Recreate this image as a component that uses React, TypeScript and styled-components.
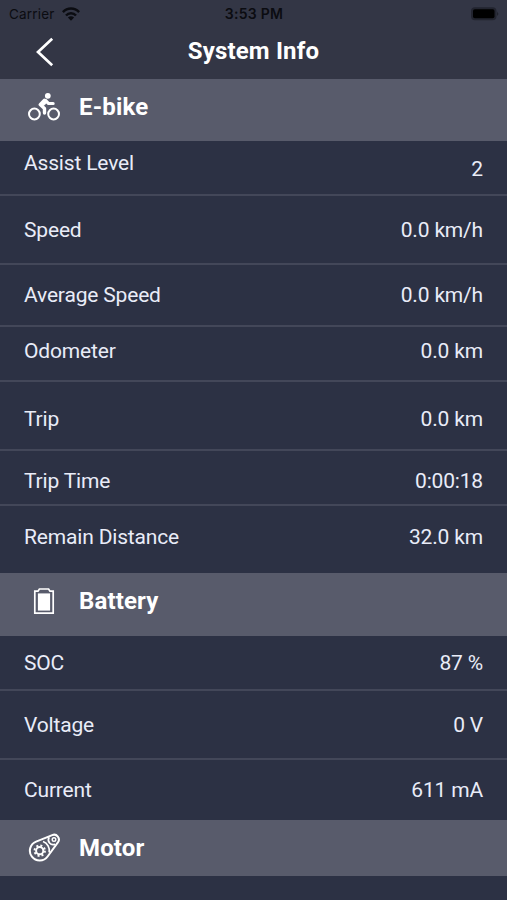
import React from "react";
import styled, { createGlobalStyle } from "styled-components";

const GlobalStyle = createGlobalStyle`
  * { box-sizing: border-box; }
  body { margin: 0; background: #2c3144; }
`;

const Screen = styled.main`
  display: flex;
  flex-direction: column;
  width: 507px;
  height: 900px;
  overflow: hidden;
  background: #2c3144;
  color: #e9ecf8;
  font-family: Roboto, "Liberation Sans", sans-serif;
`;

const TopBar = styled.header`
  height: 79px;
  flex: none;
  background: #333645;
`;

const StatusBar = styled.div`
  display: grid;
  grid-template-columns: 1fr auto 1fr;
  align-items: center;
  height: 27px;
  padding: 1px 8px 0 9px;
  color: #0b0c11;
  font-family: Inter, "Liberation Sans", sans-serif;
  font-size: 14px;
  line-height: 20px;
`;

const Carrier = styled.div`
  display: flex;
  align-items: center;
  gap: 7px;
  font-size: 13.5px;
  letter-spacing: 0.18px;
`;

const Clock = styled.time`
  font-weight: 600;
  letter-spacing: 0.25px;
`;

const BatteryLevel = styled.svg`
  justify-self: end;
`;

const NavBar = styled.nav`
  display: grid;
  grid-template-columns: 80px 1fr 80px;
  height: 52px;
`;

const BackButton = styled.button`
  display: flex;
  justify-content: flex-start;
  border: 0;
  padding: 9px 0 0 35px;
  background: none;
`;

const Title = styled.h1`
  margin: 0;
  padding-top: 10px;
  color: #fff;
  text-align: center;
  font-size: 24px;
  font-weight: 700;
  letter-spacing: 0.15px;
  line-height: 28px;
`;

const SectionHeader = styled.h2<{ $height: number; $top: number }>`
  display: flex;
  align-items: flex-start;
  flex: none;
  height: ${(p) => p.$height}px;
  margin: 0;
  padding: ${(p) => p.$top}px 0 0 27px;
  background: #585b6b;
  color: #fff;
  font-size: 24px;
  font-weight: 700;
  letter-spacing: 0.15px;
  line-height: 28px;
`;

const IconSlot = styled.span<{ $lift?: number }>`
  display: flex;
  width: 52px;
  margin-top: ${(p) => -(p.$lift ?? 0)}px;
`;

const Row = styled.div<{ $height: number; $last?: boolean }>`
  display: flex;
  justify-content: space-between;
  flex: none;
  height: ${(p) => p.$height}px;
  padding: 0 24px;
  border-bottom: ${(p) => (p.$last ? "0" : "2px solid #434759")};
  font-size: 21px;
  letter-spacing: -0.17px;
  line-height: 24px;
`;

const Cell = styled.span<{ $top: number }>`
  padding-top: ${(p) => p.$top}px;
  white-space: pre;
`;

const WifiIcon = () => (
  <svg width="18" height="14" viewBox="0 0 18 14" fill="none" stroke="#0b0c11" strokeWidth="2.5">
    <path d="M.9 5.2C5.4.4 12.6.4 17.1 5.2" />
    <path d="M4 8.5C6.7 5.6 11.3 5.6 14 8.5" />
    <path d="M9 13.7 5.9 10.5C7.6 8.9 10.4 8.9 12.1 10.5Z" fill="#0b0c11" stroke="none" />
  </svg>
);

const CyclistIcon = () => (
  <svg width="34" height="30" viewBox="0 0 34 30" fill="none" stroke="#fff">
    <circle cx="7.4" cy="22" r="5.4" strokeWidth="2" />
    <circle cx="26.6" cy="22" r="5.4" strokeWidth="2" />
    <circle cx="20.8" cy="3.8" r="2.9" fill="#fff" stroke="none" />
    <path d="M17.3 8.4 13.2 12.6 17.5 16.4V21" strokeWidth="3.4" strokeLinecap="round" strokeLinejoin="round" />
    <path d="M18.6 8.4 21.6 11.6H26.2" strokeWidth="3" strokeLinecap="round" strokeLinejoin="round" />
    <path d="M14.2 11 18.2 7.8 20 10.4 16.6 13.6Z" fill="#fff" strokeWidth="1" />
  </svg>
);

const BatteryIcon = () => (
  <svg width="34" height="30" viewBox="0 0 34 30" fill="none" stroke="#fff">
    <path d="M7.8 4.1H11L12.4 2H21.6L23 4.1H26.2V26.2H7.8Z" strokeWidth="1.7" />
    <path d="M10.9 6.4H23.1V23.6H10.9Z" fill="#fff" stroke="none" />
  </svg>
);

const MotorIcon = () => (
  <svg width="34" height="30" viewBox="0 0 34 30" fill="none" stroke="#fff">
    <path d="M9.1 8.6 25.2 2.1A4.8 4.8 0 0 1 30.9 9.4L20.6 23.5A9.8 9.8 0 1 1 9.1 8.6Z" strokeWidth="2" />
    <path d="M16 8.5A9.8 9.8 0 0 1 22.2 19.5M22.2 4.2A4.8 4.8 0 0 0 28.2 11.2" strokeWidth="1.7" />
    <circle cx="12.7" cy="17.7" r="3.6" strokeWidth="2" />
    <circle cx="12.7" cy="17.7" r="5.2" strokeWidth="2" strokeDasharray="2 2.084" />
    <circle cx="27" cy="6.6" r="1.8" strokeWidth="1.4" />
  </svg>
);

type Reading = {
  label: string;
  value: string;
  height: number;
  top: number;
  valueTop?: number;
  last?: boolean;
};

const bikeReadings: Reading[] = [
  { label: "Assist Level", value: "2", height: 55, top: 10, valueTop: 16 },
  { label: "Speed", value: "0.0 km/h", height: 69, top: 22 },
  { label: "Average Speed", value: "0.0 km/h", height: 62, top: 18 },
  { label: "Odometer", value: "0.0 km", height: 55, top: 12 },
  { label: "Trip", value: "0.0 km", height: 69, top: 25 },
  { label: "Trip Time", value: "0:00:18", height: 55, top: 18 },
  { label: "Remain Distance", value: "32.0 km", height: 67, top: 19, last: true },
];

const batteryReadings: Reading[] = [
  { label: "SOC", value: "87 %", height: 55, top: 15 },
  { label: "Voltage", value: "0 V", height: 69, top: 22 },
  { label: "Current", value: "611 mA", height: 60, top: 18, last: true },
];

const Readings = ({ items }: { items: Reading[] }) => (
  <>
    {items.map((r) => (
      <Row key={r.label} $height={r.height} $last={r.last}>
        <Cell $top={r.top}>{r.label}</Cell>
        <Cell $top={r.valueTop ?? r.top}>{r.value}</Cell>
      </Row>
    ))}
  </>
);

export default function App() {
  return (
    <Screen>
      <GlobalStyle />
      <TopBar>
        <StatusBar>
          <Carrier>
            <span>Carrier</span>
            <WifiIcon />
          </Carrier>
          <Clock>3:53 PM</Clock>
          <BatteryLevel width="30" height="16" viewBox="0 0 30 16">
            <rect x="2" y="1.2" width="25.5" height="13" rx="4" fill="#22242f" />
            <rect x="4" y="3.3" width="21.5" height="9" rx="1.8" fill="#000" />
            <path d="M28.4 5.5Q30 7.7 28.4 10Z" fill="#16171e" />
          </BatteryLevel>
        </StatusBar>
        <NavBar>
          <BackButton aria-label="Back">
            <svg width="20" height="32" viewBox="0 0 20 32" fill="none" stroke="#fff" strokeWidth="2.7">
              <path d="M17.2 2.7 3 16 17.2 29.3" />
            </svg>
          </BackButton>
          <Title>System Info</Title>
        </NavBar>
      </TopBar>
      <SectionHeader $height={62} $top={14}>
        <IconSlot $lift={1}><CyclistIcon /></IconSlot>E-bike
      </SectionHeader>
      <Readings items={bikeReadings} />
      <SectionHeader $height={63} $top={14}>
        <IconSlot><BatteryIcon /></IconSlot>Battery
      </SectionHeader>
      <Readings items={batteryReadings} />
      <SectionHeader $height={56} $top={14}>
        <IconSlot $lift={1}><MotorIcon /></IconSlot>Motor
      </SectionHeader>
    </Screen>
  );
}
